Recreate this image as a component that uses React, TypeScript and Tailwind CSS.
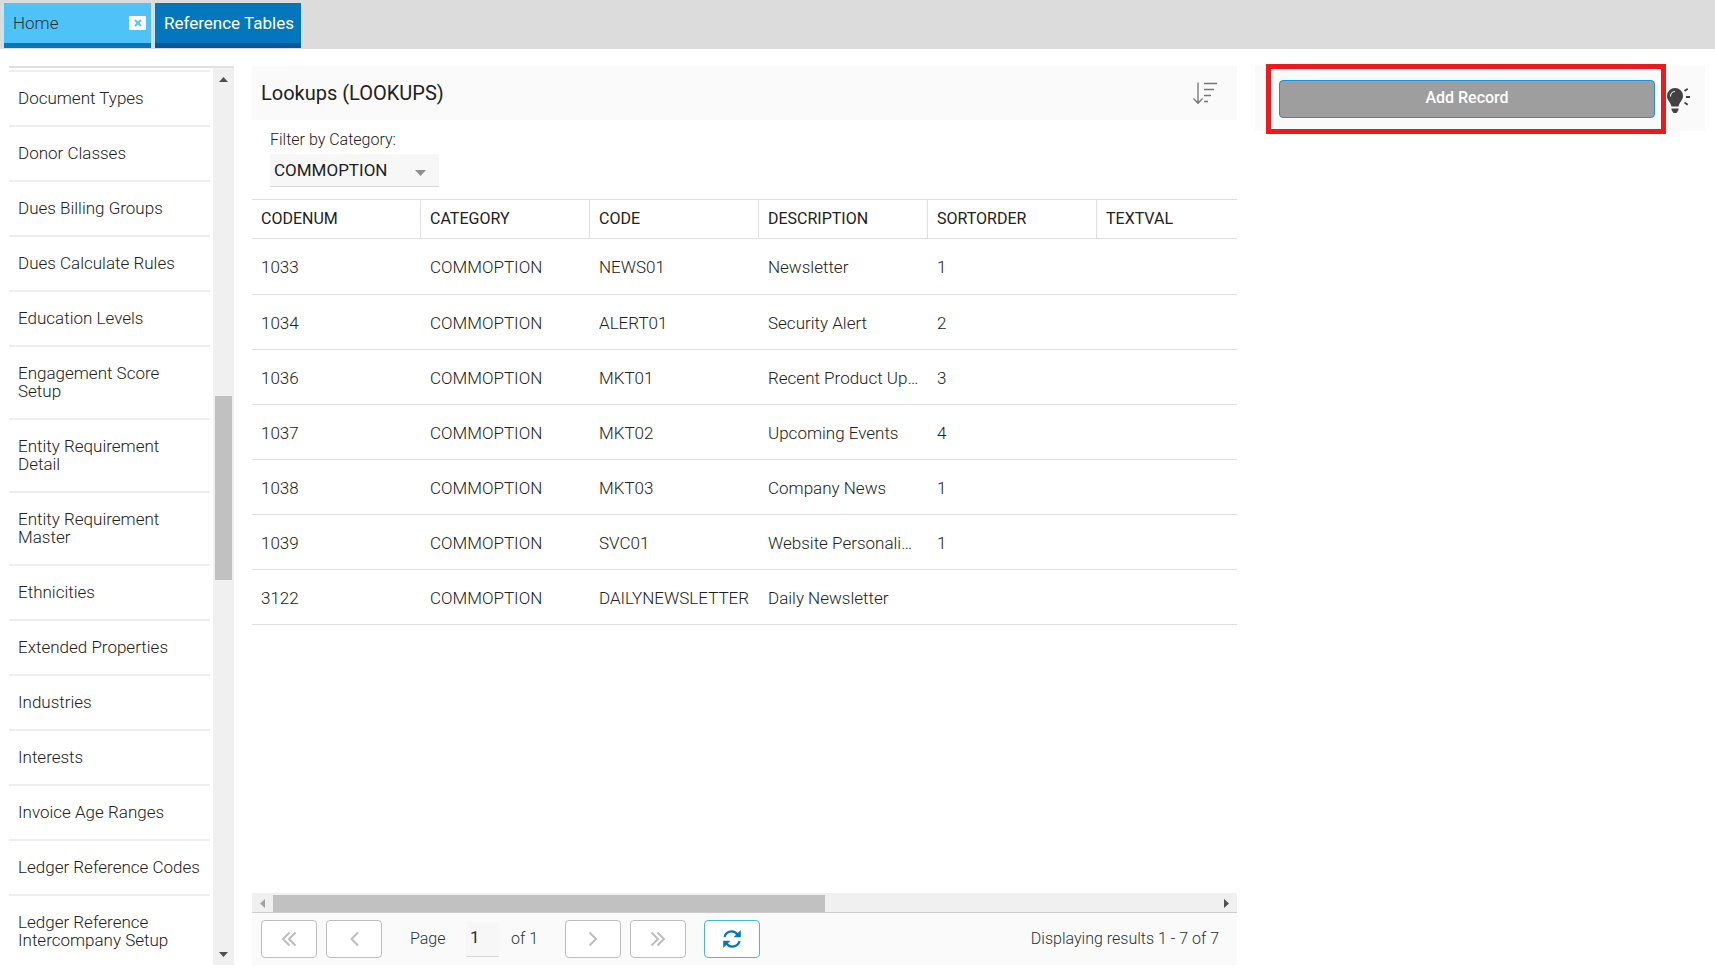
import { ReactNode } from "react";

const TABLES = [
  "Document Types",
  "Donor Classes",
  "Dues Billing Groups",
  "Dues Calculate Rules",
  "Education Levels",
  "Engagement Score Setup",
  "Entity Requirement Detail",
  "Entity Requirement Master",
  "Ethnicities",
  "Extended Properties",
  "Industries",
  "Interests",
  "Invoice Age Ranges",
  "Ledger Reference Codes",
  "Ledger Reference Intercompany Setup",
];

const COLUMNS = ["CODENUM", "CATEGORY", "CODE", "DESCRIPTION", "SORTORDER", "TEXTVAL"];

const ROWS = [
  ["1033", "COMMOPTION", "NEWS01", "Newsletter", "1", ""],
  ["1034", "COMMOPTION", "ALERT01", "Security Alert", "2", ""],
  ["1036", "COMMOPTION", "MKT01", "Recent Product Up…", "3", ""],
  ["1037", "COMMOPTION", "MKT02", "Upcoming Events", "4", ""],
  ["1038", "COMMOPTION", "MKT03", "Company News", "1", ""],
  ["1039", "COMMOPTION", "SVC01", "Website Personali…", "1", ""],
  ["3122", "COMMOPTION", "DAILYNEWSLETTER", "Daily Newsletter", "", ""],
];

function TabBar() {
  return (
    <nav className="flex h-[49px] shrink-0 gap-1 bg-[#dcdcdc] px-1 pt-[3px] pb-px">
      <div className="flex w-[147px] items-center justify-between border-b-[5px] border-[#0277bd] bg-[#4fc3f7] pr-[5px] pl-[9px]">
        <a href="#home" className="pt-[2px] text-[#263238]">Home</a>
        <button
          type="button"
          aria-label="Close Home"
          className="flex h-[14px] w-[17px] items-center justify-center rounded-[1px] bg-white"
        >
          <svg viewBox="0 0 8 8" className="h-2 w-2" stroke="#4fc3f7" strokeWidth="2">
            <path d="M1 1l6 6M7 1L1 7" />
          </svg>
        </button>
      </div>
      <a
        href="#reference-tables"
        className="flex w-[146px] items-center border-b-[5px] border-[#01579b] bg-[#0277bd] pt-[2px] pl-[9px] font-normal whitespace-nowrap text-white"
      >
        Reference Tables
      </a>
    </nav>
  );
}

function Sidebar() {
  return (
    <aside className="flex w-[225px] shrink-0 border-t-2 border-[#e0e0e0]">
      <ul className="mr-[3px] min-w-0 flex-1 overflow-hidden pt-[2px]">
        {TABLES.map((name) => (
          <li key={name} className="border-t-2 border-[#eeeeee]">
            <a href="#table" className="block pt-[17px] pr-2 pb-[18px] pl-[9px] leading-[18px]">
              {name}
            </a>
          </li>
        ))}
      </ul>
      {/* scrollbar */}
      <div className="flex w-[21px] flex-col items-center bg-[#f0f0f0] pt-[9px] pb-2">
        <svg viewBox="0 0 9 5" className="h-[5px] w-[9px]" fill="#505050">
          <path d="M4.5 0L9 5H0z" />
        </svg>
        <div className="mt-[314px] h-[184px] w-[17px] bg-[#c1c1c1]" />
        <svg viewBox="0 0 9 5" className="mt-auto h-[5px] w-[9px]" fill="#505050">
          <path d="M0 0h9L4.500 5z" />
        </svg>
      </div>
    </aside>
  );
}

function PagerButton({ label, className = "", children }: { label: string; className?: string; children: ReactNode }) {
  return (
    <button
      type="button"
      aria-label={label}
      className={`flex h-[38px] w-14 items-center justify-center rounded border border-[#bdbdbd] bg-white text-[#bdbdbd] ${className}`}
    >
      {children}
    </button>
  );
}

function Chevron({ d }: { d: string }) {
  return (
    <svg viewBox="0 0 16 16" className="h-4 w-4" fill="none" stroke="currentColor" strokeWidth="2">
      <path d={d} />
    </svg>
  );
}

function Pager() {
  return (
    <footer className="flex h-[53px] items-center border-t border-[#cccccc] bg-[#fafafa] pr-[18px] pl-[9px] text-base text-[#263238]">
      <PagerButton label="First page">
        <Chevron d="M8.500 1.500L2 8l6.500 6.500M14.500 1.500L8 8l6.500 6.500" />
      </PagerButton>
      <PagerButton label="Previous page" className="ml-[9px]">
        <Chevron d="M12 1.500L5.500 8l6.500 6.500" />
      </PagerButton>
      <label htmlFor="page" className="ml-7 w-14">Page</label>
      <input
        id="page"
        defaultValue="1"
        className="h-[35px] w-[33px] border-b border-[#d8d8d8] bg-[#f7f7f7] pb-1 pl-1 text-[17px] font-normal"
      />
      <span className="ml-3 w-[54px]">of 1</span>
      <PagerButton label="Next page">
        <Chevron d="M4.500 1.500L11 8l-6.500 6.500" />
      </PagerButton>
      <PagerButton label="Last page" className="ml-[9px]">
        <Chevron d="M1.500 1.500L8 8l-6.500 6.500M7.500 1.500L14 8l-6.500 6.500" />
      </PagerButton>
      <button
        type="button"
        aria-label="Refresh"
        className="ml-[18px] flex h-[38px] w-14 items-center justify-center rounded border border-[#4db1e2] bg-white text-[#0277bd]"
      >
        <svg viewBox="0 0 18 18" className="h-[18px] w-[18px]" fill="none" stroke="currentColor" strokeWidth="2.200">
          <path d="M1.500 7A7.300 7.300 0 0 1 14.500 4.500M16.500 11A7.300 7.300 0 0 1 3.500 13.500" />
          <path d="M17.800 0v7.200h-7.200zM.2 18v-7.200h7.200z" fill="currentColor" stroke="none" />
        </svg>
      </button>
      <span className="ml-auto">Displaying results 1 - 7 of 7</span>
    </footer>
  );
}

function LookupsPanel() {
  return (
    <main className="flex min-w-0 flex-1 flex-col">
      <header className="flex h-[54px] items-center justify-between bg-[#fafafa] pr-5 pl-[9px]">
        <h1 className="text-xl font-normal">Lookups (LOOKUPS)</h1>
        <button type="button" aria-label="Sort">
          <svg viewBox="0 0 24 22" className="h-[22px] w-6" fill="none" stroke="#757575" strokeWidth="1.300">
            <path d="M5 .5v21M.5 16.500L5 21.300l4.500-4.800M11 1.500h13M11 7.500h10M11 13.500h7M11 19.500h4" />
          </svg>
        </button>
      </header>

      <div className="flex flex-col items-start pt-[10px] pb-3 pl-[18px]">
        <label htmlFor="category" className="text-base leading-5">Filter by Category:</label>
        <div className="relative mt-1">
          <select
            id="category"
            className="h-[33px] w-[169px] appearance-none border-b border-[#d8d8d8] bg-[#f7f7f7] pt-px pl-1 font-normal"
          >
            <option>COMMOPTION</option>
          </select>
          <svg viewBox="0 0 11 6" className="pointer-events-none absolute top-4 right-[13px] h-[6px] w-[11px]" fill="#8f8f8f">
            <path d="M0 0h11L5.500 6z" />
          </svg>
        </div>
      </div>

      <div className="min-h-0 flex-1 overflow-hidden">
        <table className="w-[1181px] table-fixed border-separate border-spacing-0 text-left">
          <thead>
            <tr className="h-10">
              {COLUMNS.map((name) => (
                <th key={name} className="w-[169px] border-y border-r border-[#e0e0e0] pl-[9px] text-base font-normal">
                  {name}
                </th>
              ))}
              <th className="border-y border-[#e0e0e0]" />
            </tr>
          </thead>
          <tbody>
            {ROWS.map((row) => (
              <tr key={row[0]} className="h-[55px] first:h-14">
                {row.map((cell, i) => (
                  <td key={COLUMNS[i]} className="truncate border-b border-[#e0e0e0] px-[9px] pt-[3px]">
                    {cell}
                  </td>
                ))}
                <td className="border-b border-[#e0e0e0]" />
              </tr>
            ))}
          </tbody>
        </table>
      </div>

      {/* horizontal scrollbar */}
      <div className="flex h-[19px] shrink-0 items-center bg-[#f0f0f0] px-2 pt-[2px]">
        <svg viewBox="0 0 5 9" className="h-[9px] w-[5px]" fill="#a3a3a3">
          <path d="M5 0v9L0 4.500z" />
        </svg>
        <div className="ml-2 h-[17px] w-[57%] bg-[#c1c1c1]" />
        <svg viewBox="0 0 5 9" className="ml-auto h-[9px] w-[5px]" fill="#505050">
          <path d="M0 0v9l5-4.500z" />
        </svg>
      </div>
      <Pager />
    </main>
  );
}

function ActionsPanel() {
  return (
    <section className="flex h-[65px] w-[450px] shrink-0 items-center bg-[#fafafa] pl-[11px]">
      <div className="-my-1 flex h-[70px] w-[400px] shrink-0 items-center border-[5px] border-[#e81c1c] pr-[6px] pl-2">
        <button
          type="button"
          className="h-[38px] w-full rounded border border-[#1a91d1] bg-[#9e9e9e] pb-[2px] text-base font-medium text-white"
        >
          Add Record
        </button>
      </div>
      <button type="button" aria-label="Tips" className="pt-1">
        <svg viewBox="0 0 25 26" className="h-[26px] w-[25px]" fill="#424242">
          <path d="M9 0a8 8 0 0 0-8 8c0 4 3.200 5.500 4.500 10.500h7C13.800 13.500 17 12 17 8a8 8 0 0 0-8-8z" />
          <path d="M5.500 20.500h7V22l-2 3h-3l-2-3z" />
          <path d="M4.500 8.500A4.800 4.800 0 0 1 9 3.500" fill="none" stroke="#fafafa" strokeWidth="1.200" />
          <path d="M18.500 3l3.200-2.200M20 9h4M18.500 14.500l3.200 2.200" stroke="#424242" strokeWidth="1.800" />
        </svg>
      </button>
    </section>
  );
}

export default function App() {
  return (
    <div className="flex h-screen flex-col overflow-hidden bg-white font-['Roboto',sans-serif] text-[17px] font-light text-[#212121]">
      <TabBar />
      <div className="flex min-h-0 flex-1 items-stretch gap-[18px] pt-[17px] pr-[10px] pb-[13px] pl-[9px]">
        <Sidebar />
        <LookupsPanel />
        <ActionsPanel />
      </div>
    </div>
  );
}
